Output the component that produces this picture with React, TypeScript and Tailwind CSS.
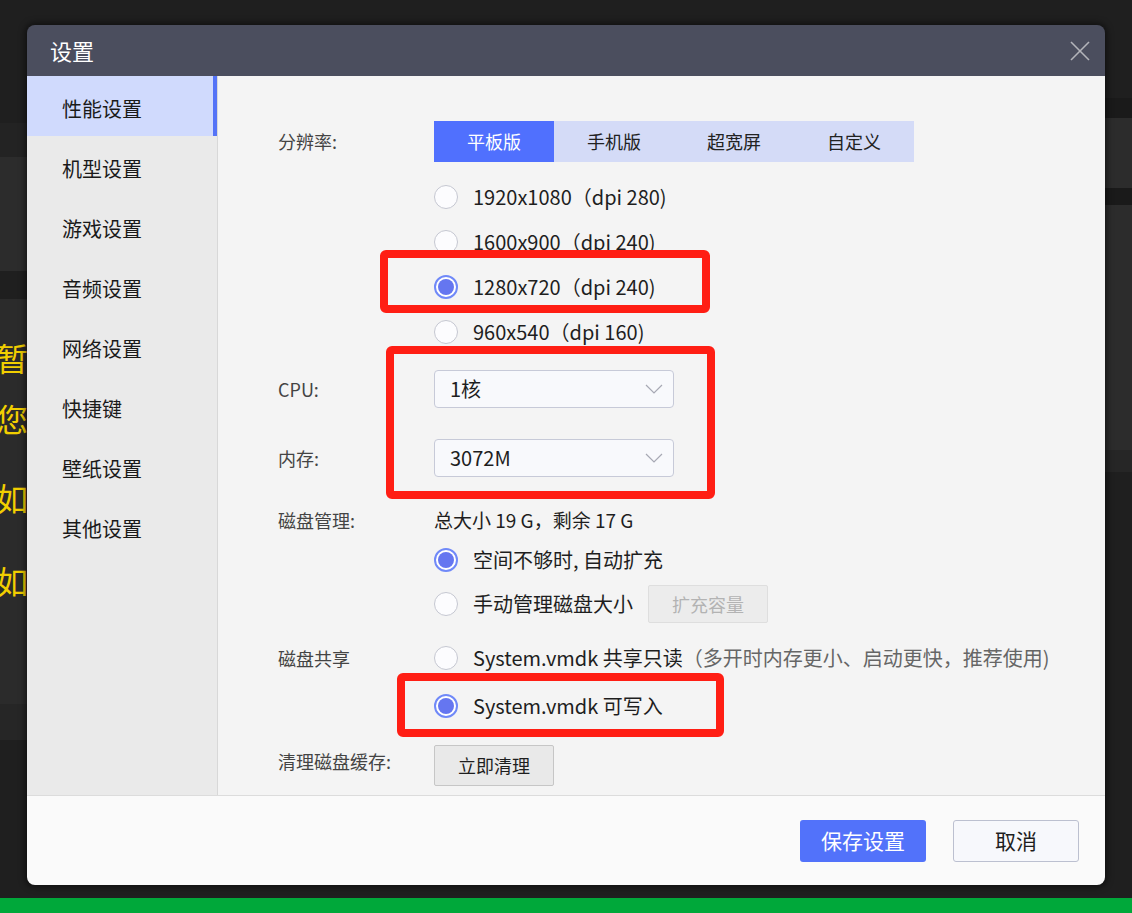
import React from "react";

const Radio = ({ checked }: { checked?: boolean }) =>
  checked ? (
    <span className="flex h-[24px] w-[24px] shrink-0 items-center justify-center rounded-full border-2 border-[#7089f8] bg-white">
      <span className="h-[16px] w-[16px] rounded-full bg-[#6576f0]" />
    </span>
  ) : (
    <span className="h-[24px] w-[24px] shrink-0 rounded-full border-[1.5px] border-[#c5c7d1] bg-[#fcfcfe]" />
  );

const Chevron = () => (
  <svg width="18" height="10" viewBox="0 0 18 10" fill="none">
    <polyline points="1,1 9,9 17,1" stroke="#a7a9b4" strokeWidth="1.2" />
  </svg>
);

const Select = ({ value }: { value: string }) => (
  <div className="flex h-[38px] w-[240px] items-center justify-between rounded-[4px] border border-[#c7cad8] bg-[#f8f9fc] pl-[15px] pr-[10px] text-[20px] text-[#1e1e1e]">
    <span>{value}</span>
    <Chevron />
  </div>
);

const Label = ({ children }: { children: React.ReactNode }) => (
  <div className="w-[156px] shrink-0 text-[18px] text-[#444]">{children}</div>
);

const RadioRow = ({
  checked,
  h,
  children,
}: {
  checked?: boolean;
  h: string;
  children: React.ReactNode;
}) => (
  <div className={`flex items-center gap-[15px] text-[20px] text-[#1e1e1e] ${h}`}>
    <Radio checked={checked} />
    {children}
  </div>
);

const menu = ["性能设置", "机型设置", "游戏设置", "音频设置", "网络设置", "快捷键", "壁纸设置", "其他设置"];

export default function App() {
  return (
    <div className="relative h-[913px] w-[1132px] overflow-hidden bg-[#1f1f1f] font-['Noto_Sans_CJK_SC',sans-serif]">
      {/* background app */}
      <div className="flex h-[898px]">
        <div className="flex w-[27px] flex-col">
          <div className="h-[123px] bg-[#1f1f1f]" />
          <div className="h-[34px] bg-[#232323]" />
          <div className="h-[114px] bg-[#2c2c2c]" />
          <div className="h-[28px] bg-[#1f1f1f]" />
          <div className="flex h-[405px] flex-col overflow-hidden bg-[#2b2b2b] text-[32px] leading-[34px] text-[#f2cf00]">
            <span className="-ml-[4px] mt-[41px]">暂</span>
            <span className="-ml-[4px] mt-[27px]">您</span>
            <span className="-ml-[4px] mt-[45px]">如</span>
            <span className="-ml-[4px] mt-[49px]">如</span>
          </div>
          <div className="h-[36px] bg-[#262626]" />
          <div className="flex-1 bg-[#1f1f1f]" />
        </div>
        <div className="flex-1" />
        <div className="flex w-[27px] flex-col">
          <div className="h-[98px] bg-[#1f1f1f]" />
          <div className="h-[20px] bg-[#1a1a1a]" />
          <div className="h-[70px] bg-[#2c2c2c]" />
          <div className="h-[17px] bg-[#1a1a1a]" />
          <div className="h-[245px] bg-[#2c2c2c]" />
          <div className="h-[22px] bg-[#262626]" />
          <div className="flex-1 bg-[#1f1f1f]" />
        </div>
      </div>
      <div className="h-[15px] bg-[#00a83a]" />

      {/* dialog */}
      <div className="absolute left-[27px] top-[25px] flex h-[860px] w-[1078px] flex-col overflow-hidden rounded-[8px] shadow-[0_0_6px_2px_rgba(0,0,0,0.5)]">
        <div className="flex h-[51px] shrink-0 items-center justify-between bg-[#4b4e5e] pl-[23px] pr-[15px]">
          <span className="text-[22px] text-white">设置</span>
          <svg width="20" height="20" viewBox="0 0 20 20" fill="none">
            <line x1="1" y1="1" x2="19" y2="19" stroke="#b3b4ba" strokeWidth="1.6" />
            <line x1="19" y1="1" x2="1" y2="19" stroke="#b3b4ba" strokeWidth="1.6" />
          </svg>
        </div>
        <div className="flex h-[719px] shrink-0">
          <div className="flex w-[191px] shrink-0 flex-col border-r border-[#d8d8d8] bg-[#eaeaea]">
            {menu.map((m, i) => (
              <div
                key={m}
                className={`flex h-[60px] items-center pl-[35px] pt-[5px] text-[20px] text-[#1a1a1a] ${
                  i === 0 ? "bg-[#d0dafd] shadow-[inset_-4px_0_0_#5473f7]" : ""
                }`}
              >
                {m}
              </div>
            ))}
          </div>
          <div className="flex flex-1 flex-col bg-[#f4f4f4] pl-[60px] pt-[45px]">
            <div className="flex h-[41px] items-center">
              <Label>分辨率:</Label>
              <div className="flex text-[18px]">
                <div className="flex h-[41px] w-[120px] items-center justify-center bg-[#5070fe] text-white">平板版</div>
                <div className="flex h-[41px] w-[120px] items-center justify-center bg-[#d4dbf7] text-[#222]">手机版</div>
                <div className="flex h-[41px] w-[120px] items-center justify-center bg-[#d4dbf7] text-[#222]">超宽屏</div>
                <div className="flex h-[41px] w-[120px] items-center justify-center bg-[#d4dbf7] text-[#222]">自定义</div>
              </div>
            </div>
            <div className="ml-[156px] mt-[12px] flex flex-col">
              <RadioRow h="h-[45px]">1920x1080（dpi 280)</RadioRow>
              <RadioRow h="h-[45px]">1600x900（dpi 240)</RadioRow>
              <RadioRow h="h-[45px]" checked>1280x720（dpi 240)</RadioRow>
              <RadioRow h="h-[45px]">960x540（dpi 160)</RadioRow>
            </div>
            <div className="mt-[16px] flex items-center">
              <Label>CPU:</Label>
              <Select value="1核" />
            </div>
            <div className="mt-[31px] flex items-center">
              <Label>内存:</Label>
              <Select value="3072M" />
            </div>
            <div className="mt-[31px] flex h-[24px] items-center">
              <Label>磁盘管理:</Label>
              <span className="text-[19px] text-[#1e1e1e]">总大小 19 G，剩余 17 G</span>
            </div>
            <div className="ml-[156px] mt-[6px] flex flex-col">
              <RadioRow h="h-[44px]" checked>空间不够时, 自动扩充</RadioRow>
              <RadioRow h="h-[44px]">
                <span>手动管理磁盘大小</span>
                <div className="flex h-[38px] w-[120px] items-center justify-center rounded-[2px] border border-[#dedede] bg-[#ececec] text-[18px] text-[#b3b3b3]">
                  扩充容量
                </div>
              </RadioRow>
            </div>
            <div className="mt-[8px] flex h-[48px] items-center">
              <Label>磁盘共享</Label>
              <RadioRow h="h-[48px]">
                <span>
                  System.vmdk 共享只读<span className="text-[#666]">（多开时内存更小、启动更快，推荐使用)</span>
                </span>
              </RadioRow>
            </div>
            <div className="ml-[156px]">
              <RadioRow h="h-[48px]" checked>System.vmdk 可写入</RadioRow>
            </div>
            <div className="mt-[15px] flex items-center">
              <div className="-mt-[8px]">
                <Label>清理磁盘缓存:</Label>
              </div>
              <div className="flex h-[41px] w-[120px] items-center justify-center rounded-[2px] border border-[#c6c6c6] bg-[#e9e9e9] text-[18px] text-[#1e1e1e]">
                立即清理
              </div>
            </div>
          </div>
        </div>
        <div className="flex flex-1 items-center justify-end gap-[27px] border-t border-[#dcdcdc] bg-[#fafafa] pr-[26px]">
          <div className="flex h-[42px] w-[126px] items-center justify-center rounded-[3px] bg-[#5272fa] text-[21px] text-white">
            保存设置
          </div>
          <div className="flex h-[42px] w-[126px] items-center justify-center rounded-[3px] border border-[#bcc0d0] bg-[#f7f8fc] text-[21px] text-[#1e1e1e]">
            取消
          </div>
        </div>
      </div>

      {/* red annotation boxes */}
      <div className="absolute left-[380px] top-[250px] h-[63px] w-[330px] rounded-[6px] border-[8px] border-[#ff1e14]" />
      <div className="absolute left-[386px] top-[346px] h-[153px] w-[329px] rounded-[6px] border-[8px] border-[#ff1e14]" />
      <div className="absolute left-[397px] top-[673px] h-[64px] w-[327px] rounded-[6px] border-[8px] border-[#ff1e14]" />
    </div>
  );
}
